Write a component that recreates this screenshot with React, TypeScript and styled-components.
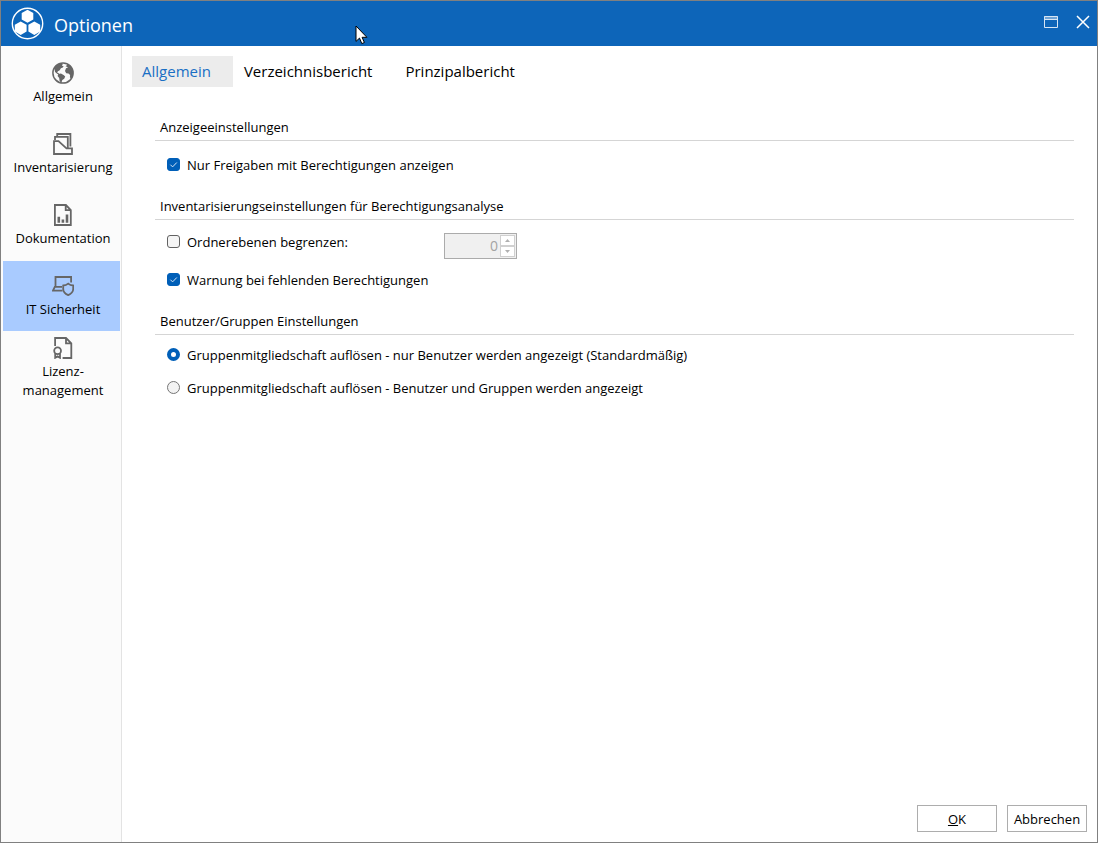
import React, { useState } from "react";
import styled, { createGlobalStyle } from "styled-components";

const GlobalStyle = createGlobalStyle`
  *, *::before, *::after { box-sizing: border-box; }
  body {
    margin: 0;
    background: #fff;
    color: #000;
    font-family: "Segoe UI", "Open Sans", "Noto Sans", sans-serif;
    font-size: 13px;
    line-height: 19px;
  }
  button, input { font: inherit; color: inherit; }
`;

const Window = styled.div`
  position: relative;
  display: flex;
  flex-direction: column;
  min-height: 100vh;
  border: 1px solid #808080;
  background: #fff;
`;

const TitleBar = styled.header`
  display: flex;
  align-items: center;
  height: 45px;
  padding: 0 0 0 10px;
  background: #0d65b9;
  color: #fff;
`;

const Title = styled.h1`
  flex: 1;
  margin: 2px 0 0 9px;
  font-size: 18px;
  line-height: 26px;
  font-weight: 400;
`;

const WindowButton = styled.button`
  display: flex;
  width: 32px;
  height: 42px;
  padding: 0;
  align-items: center;
  justify-content: center;
  border: 0;
  background: none;
`;

const WindowButtons = styled.div`
  display: flex;
  align-self: flex-start;
  margin-right: -2px;
`;

const Body = styled.div`
  display: flex;
  flex: 1;
`;

const Sidebar = styled.nav`
  display: flex;
  flex-direction: column;
  flex: 0 0 121px;
  gap: 1px;
  padding: 2px 1px 2px 2px;
  background: #fbfbfb;
  border-right: 1px solid #e3e3e3;
`;

const SidebarItem = styled.button<{ $active: boolean }>`
  display: flex;
  flex-direction: column;
  align-items: center;
  justify-content: center;
  gap: 3px;
  height: 70px;
  padding: 2px 0 0 3px;
  border: 0;
  white-space: pre-line;
  text-align: center;
  background: ${(p) => (p.$active ? "#a9cbff" : "transparent")};
`;

const Main = styled.main`
  display: flex;
  flex: 1;
  flex-direction: column;
  min-width: 0;
  padding: 10px 10px;
`;

const Tabs = styled.div`
  display: flex;
  gap: 1px;
`;

const Tab = styled.button<{ $active: boolean }>`
  height: 31px;
  padding: 0 22px 0 10px;
  border: 0;
  font-size: 15px;
  background: ${(p) => (p.$active ? "#ececec" : "transparent")};
  color: ${(p) => (p.$active ? "#1a6fc4" : "#000")};
`;

const Settings = styled.form`
  flex: 1;
  padding: 30px 13px 0 23px;
`;

const Section = styled.fieldset`
  min-width: 0;
  margin: 0;
  padding: 0;
  border: 0;
`;

const SectionTitle = styled.legend`
  display: block;
  width: 100%;
  height: 24px;
  padding: 1px 5px 0;
  border-bottom: 1px solid #d5d5d5;
`;

const Rows = styled.div<{ $gap: number; $top: number }>`
  display: flex;
  flex-direction: column;
  gap: ${(p) => p.$gap}px;
  padding: ${(p) => p.$top}px 12px 21px;
`;

const LimitRow = styled.div`
  display: grid;
  grid-template-columns: 277px 73px;
  align-items: start;
`;

const ChoiceLabel = styled.label`
  display: flex;
  align-items: center;
  gap: 7px;
`;

const CHECK = `url("data:image/svg+xml,%3Csvg xmlns='http://www.w3.org/2000/svg' viewBox='0 0 13 13'%3E%3Cpath d='M3.4 6.7l2.2 2.2 4.2-4.4' fill='none' stroke='%23d5e5f5' stroke-width='1'/%3E%3C/svg%3E")`;

const CheckBox = styled.input.attrs({ type: "checkbox" })`
  appearance: none;
  flex: none;
  width: 13px;
  height: 13px;
  margin: 0 0 2px;
  border: 1px solid #626262;
  border-radius: 3px;
  background: #f5f5f5;
  &:checked {
    border-color: #005fb8;
    background: #005fb8 ${CHECK} center / 13px 13px no-repeat;
  }
`;

const Radio = styled.input.attrs({ type: "radio" })`
  appearance: none;
  flex: none;
  width: 13px;
  height: 13px;
  margin: 0 0 2px;
  border: 1px solid #757575;
  border-radius: 50%;
  background: #f3f3f3;
  &:checked {
    border: 4px solid #005fb8;
    background: #fff;
  }
`;

const Spinner = styled.div`
  display: flex;
  height: 26px;
  padding: 1px;
  border: 1px solid #ababab;
  background: #f0f0f0;
`;

const SpinnerInput = styled.input.attrs({ type: "number" })`
  appearance: textfield;
  flex: 1;
  min-width: 0;
  padding: 0 2px 2px 0;
  border: 0;
  background: none;
  text-align: right;
  font-size: 14px;
  color: #a3a3a3;
  &::-webkit-inner-spin-button { appearance: none; margin: 0; }
`;

const SpinnerButtons = styled.div`
  display: flex;
  flex-direction: column;
  width: 15px;
`;

const StepButton = styled.button`
  display: flex;
  flex: 1;
  align-items: center;
  justify-content: center;
  padding: 0;
  border: 1px solid #d0d0d0;
  background: #fff;
`;

const Footer = styled.footer`
  display: flex;
  justify-content: flex-end;
  gap: 10px;
`;

const DialogButton = styled.button`
  width: 80px;
  height: 27px;
  padding: 1px 0 0;
  border: 1px solid #adadad;
  background: #fff;
`;

const Pointer = styled.svg`
  position: absolute;
  left: 354px;
  top: 24px;
  pointer-events: none;
`;

const LogoIcon = () => (
  <svg width="34" height="34" viewBox="0 0 34 34" fill="#fff" aria-hidden="true">
    <circle cx="16.5" cy="16.5" r="15.2" fill="none" stroke="#fff" strokeWidth="1.4" />
    <path d="M16.5 2.7l5.8 3.2v6.6l-5.8 3.3-5.8-3.3V5.900zM9.700 14.500l5.9 3.3v6.8l-5.9 3.3-5.9-3.3v-6.8zM23.300 14.500l5.9 3.3v6.8l-5.9 3.3-5.9-3.3v-6.8z" />
  </svg>
);

const Glyph = ({ children }: { children: React.ReactNode }) => (
  <svg width="22" height="22" viewBox="0 0 22 22" fill="none" stroke="#666" strokeWidth="1.8" aria-hidden="true">
    {children}
  </svg>
);

const GlobeIcon = () => (
  <Glyph>
    <circle cx="11" cy="11" r="10.1" strokeWidth="1.5" />
    <path
      d="M2.2 6.2L5 3l3.8-1.7 2 .8-.9 1.6 1.7.2-.8 1.6-1.9.8-1.2 2-1.8.9-.8 1.4 1.6.6.5 1.2-1.8-.4-2.3-2zM6.3 12l2.6-.6 2.7 1.6 1.6 1.5-1 2.2-1.9 1.2-1 3-1.7-1.8-.4-3-1.6-2zM13.6 4.3l2.3-2 3.5 2.8 1.8 4.2-.2 4.6-1.8 3.3-1.3-1.9.2-2.3-1.6-1.4-2.3-.3-1.2-2.3 1-2.8 2-.8-1.2-.6z"
      fill="#666"
      stroke="none"
    />
  </Glyph>
);

const FoldersIcon = () => (
  <Glyph>
    <path d="M3 7V3.800h12.800v11M5.200 3.400V1h13.200V13.500M2 21V8.200h4.500l8 7.200h5.500V21z" />
  </Glyph>
);

const ReportIcon = () => (
  <Glyph>
    <path d="M2.900 1h11l4.900 5v15H2.900zM13.700 1v5.200h5" />
    <path d="M6.800 18.800v-6M10.900 18.800v-3.200M15 18.800v-8.400" strokeWidth="2.600" />
  </Glyph>
);

const LaptopShieldIcon = () => (
  <Glyph>
    <path d="M3.500 11V2h15.600v5.500M10 11.900H2.800L1 15.600h9.500" />
    <path d="M16.200 8.600c1.600 1.300 3.300 1.800 5 1.900v3.400c0 2.800-2 4.900-5 6.200-3-1.300-5-3.400-5-6.200v-3.400c1.700-.1 3.400-.6 5-1.900z" />
  </Glyph>
);

const LicenseIcon = () => (
  <Glyph>
    <path d="M3.100 9V1H14l5.300 5.300V21H10.600M14 1v5.300h5.300" />
    <circle cx="5.600" cy="13.700" r="3.400" />
    <path d="M3.200 16.200v4.600l2.400-1.400L8 20.800v-4.600" />
  </Glyph>
);

const navItems = [
  { label: "Allgemein", icon: <GlobeIcon /> },
  { label: "Inventarisierung", icon: <FoldersIcon /> },
  { label: "Dokumentation", icon: <ReportIcon /> },
  { label: "IT Sicherheit", icon: <LaptopShieldIcon /> },
  { label: "Lizenz-\nmanagement", icon: <LicenseIcon /> },
];

const tabs = ["Allgemein", "Verzeichnisbericht", "Prinzipalbericht"];

export default function App() {
  const [page, setPage] = useState(3);
  const [tab, setTab] = useState(0);
  const [limit, setLimit] = useState(false);
  const [levels, setLevels] = useState(0);

  return (
    <>
      <GlobalStyle />
      <Window>
        <TitleBar>
          <LogoIcon />
          <Title>Optionen</Title>
          <WindowButtons>
            <WindowButton type="button" aria-label="Maximieren">
              <svg width="16" height="14" viewBox="0 0 16 14" fill="none" stroke="#d6e5f4" aria-hidden="true">
                <path d="M1 1h14v3H1z" fill="#6ea3d6" stroke="none" />
                <path d="M1.5 1.5h13v11h-13zM1.5 4.5h13" />
              </svg>
            </WindowButton>
            <WindowButton type="button" aria-label="Schließen">
              <svg width="14" height="14" viewBox="0 0 14 14" stroke="#fff" strokeWidth="1.5" aria-hidden="true">
                <path d="M1 1l12 12M13 1L1 13" />
              </svg>
            </WindowButton>
          </WindowButtons>
        </TitleBar>
        <Body>
          <Sidebar>
            {navItems.map((item, i) => (
              <SidebarItem key={item.label} type="button" $active={i === page} onClick={() => setPage(i)}>
                {item.icon}
                <span>{item.label}</span>
              </SidebarItem>
            ))}
          </Sidebar>
          <Main>
            <Tabs role="tablist">
              {tabs.map((name, i) => (
                <Tab key={name} type="button" role="tab" aria-selected={i === tab} $active={i === tab} onClick={() => setTab(i)}>
                  {name}
                </Tab>
              ))}
            </Tabs>
            <Settings id="settings">
              <Section>
                <SectionTitle>Anzeigeeinstellungen</SectionTitle>
                <Rows $top={15} $gap={19}>
                  <ChoiceLabel>
                    <CheckBox defaultChecked />
                    Nur Freigaben mit Berechtigungen anzeigen
                  </ChoiceLabel>
                </Rows>
              </Section>
              <Section>
                <SectionTitle>Inventarisierungseinstellungen für Berechtigungsanalyse</SectionTitle>
                <Rows $top={13} $gap={12}>
                  <LimitRow>
                    <ChoiceLabel>
                      <CheckBox checked={limit} onChange={(e) => setLimit(e.target.checked)} />
                      Ordnerebenen begrenzen:
                    </ChoiceLabel>
                    <Spinner>
                      <SpinnerInput
                        aria-label="Anzahl Ordnerebenen"
                        disabled={!limit}
                        min={0}
                        value={levels}
                        onChange={(e) => setLevels(Number(e.target.value))}
                      />
                      <SpinnerButtons>
                        <StepButton type="button" aria-label="Erhöhen" disabled={!limit} onClick={() => setLevels(levels + 1)}>
                          <svg width="5" height="3" viewBox="0 0 5 3" fill="#b0b0b0" aria-hidden="true"><path d="M0 3L2.5 0 5 3z" /></svg>
                        </StepButton>
                        <StepButton type="button" aria-label="Verringern" disabled={!limit} onClick={() => setLevels(Math.max(0, levels - 1))}>
                          <svg width="5" height="3" viewBox="0 0 5 3" fill="#b0b0b0" aria-hidden="true"><path d="M0 0h5L2.5 3z" /></svg>
                        </StepButton>
                      </SpinnerButtons>
                    </Spinner>
                  </LimitRow>
                  <ChoiceLabel>
                    <CheckBox defaultChecked />
                    Warnung bei fehlenden Berechtigungen
                  </ChoiceLabel>
                </Rows>
              </Section>
              <Section>
                <SectionTitle>Benutzer/Gruppen Einstellungen</SectionTitle>
                <Rows $top={11} $gap={14}>
                  <ChoiceLabel>
                    <Radio name="resolve" value="users" defaultChecked />
                    Gruppenmitgliedschaft auflösen - nur Benutzer werden angezeigt (Standardmäßig)
                  </ChoiceLabel>
                  <ChoiceLabel>
                    <Radio name="resolve" value="groups" />
                    Gruppenmitgliedschaft auflösen - Benutzer und Gruppen werden angezeigt
                  </ChoiceLabel>
                </Rows>
              </Section>
            </Settings>
            <Footer>
              <DialogButton type="submit" form="settings"><u>O</u>K</DialogButton>
              <DialogButton type="button">Abbrechen</DialogButton>
            </Footer>
          </Main>
        </Body>
        <Pointer width="13" height="20" viewBox="0 0 13 20" aria-hidden="true">
          <path d="M1 1v15.4l3.5-3.3L6.8 18.6l2.6-1.1-2.3-5.2h4.8z" fill="#fff" stroke="#000" />
        </Pointer>
      </Window>
    </>
  );
}
